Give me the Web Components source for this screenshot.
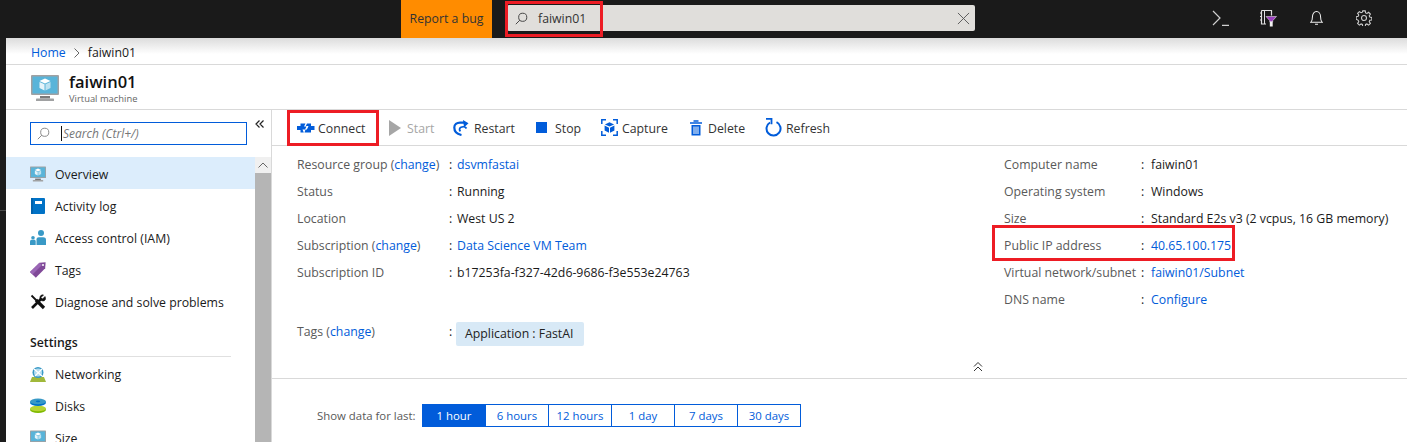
<!DOCTYPE html>
<html>
<head>
<meta charset="utf-8">
<title>faiwin01</title>
<style>
  html, body { margin: 0; height: 442px; overflow: hidden; background: #1a1a1a; }
  body { font: 12.3px/16px "Open Sans", "Liberation Sans", sans-serif; color: #1a1a1a; }
  .page { display: flex; flex-direction: column; height: 442px; }
  .work { display: flex; flex: 1; min-height: 0; }
</style>
</head>
<body>
<div class="page">
  <az-topbar></az-topbar>
  <div class="work">
    <az-strip></az-strip>
    <az-blade></az-blade>
  </div>
</div>

<script>
const ICONS = {
  search: '<svg width="13" height="13" viewBox="0 0 16 16" fill="none" stroke="currentColor" stroke-width="1.2"><circle cx="9.5" cy="6.5" r="5"/><path d="M6 10 1 15"/></svg>',
  close: '<svg width="13" height="13" viewBox="0 0 14 14" fill="none" stroke="#555" stroke-width="1"><path d="M1 1l12 12M13 1 1 13"/></svg>',
  shell: '<svg width="17" height="16" viewBox="0 0 17 16" fill="none" stroke="#d0d0d0" stroke-width="1.2"><path d="M1 1l7 7-7 7M10 15.400H17"/></svg>',
  directory: '<svg width="18" height="18" viewBox="0 0 18 18" fill="none"><path d="M2.500 1.500h10v5M7 15H2.500V1.500" stroke="#e0e0e0" stroke-width="1.200"/><path d="M5.500 1.500V15" stroke="#e0e0e0"/><path d="M1 4h2M1 7.500h2M1 11h2" stroke="#e0e0e0"/><path d="M7 7.500h10.500l-3.800 4.200v1.300h-2.900v-1.300z" fill="#9b3fc0" stroke="#ddd" stroke-width=".6"/><path d="M10.800 12.500h2.900V17.500h-2.900z" fill="#f2f2f2"/></svg>',
  bell: '<svg width="13" height="16" viewBox="0 0 14 16" fill="none" stroke="#f0f0f0" stroke-width="1.100"><path d="M1 12.500c1.400-1.200 1.600-2.400 1.600-5.500C2.600 3.400 4.600 1 7 1s4.400 2.400 4.400 6c0 3.100.2 4.300 1.600 5.500zM5.400 14.700h3.200"/></svg>',
  gear: '<svg width="16" height="16" viewBox="0 0 18 18" fill="none" stroke="#cfcfcf" stroke-width="1.200"><circle cx="9" cy="9" r="2.800"/><path d="M7.600 1h2.800l.4 2.300 1.500.6 1.900-1.300 2 2-1.300 1.900.6 1.500 2.300.4v2.800l-2.300.4-.6 1.500 1.300 1.900-2 2-1.900-1.300-1.500.6-.4 2.300H7.600l-.4-2.300-1.500-.6-1.900 1.300-2-2 1.300-1.900-.6-1.500L.2 10.400V7.600l2.300-.4.6-1.500L1.800 3.800l2-2 1.900 1.300 1.500-.6z"/></svg>',
  vm: '<svg width="100%" height="100%" viewBox="0 0 28 28"><rect x="0" y="1" width="28" height="20" rx="1" fill="#a0a1a2"/><rect x="1.500" y="2.500" width="25" height="17" fill="#59b4d9"/><path d="M9 22h10v2.500H9z" fill="#7a7a7a"/><path d="M6 24.500h16c.6 0 1 .4 1 1V27H5v-1.500c0-.6.4-1 1-1z" fill="#a0a1a2"/><path d="M14 4.500l5.500 2.500-5.500 2.500L8.500 7z" fill="#fff"/><path d="M8.500 8l5 2.300v6.200l-5-2.500z" fill="#fff" opacity=".85"/><path d="M19.500 8l-5 2.300v6.200l5-2.500z" fill="#fff" opacity=".6"/></svg>',
  log: '<svg width="16" height="16" viewBox="0 0 16 16"><rect x="1" y="0" width="14" height="16" rx="1" fill="#0072c6"/><rect x="1" y="0" width="2" height="16" fill="#0062ad"/><rect x="5" y="3" width="7" height="3" fill="#fff"/></svg>',
  iam: '<svg width="16" height="16" viewBox="0 0 16 16" fill="#3999c6"><circle cx="11" cy="3" r="3"/><path d="M6.500 15V9.500c0-1.400 1-2.300 2.300-2.300h4.400c1.400 0 2.800.9 2.800 2.300V15z"/><circle cx="3" cy="7.800" r="1.800"/><path d="M0 15v-3.500c0-1.100.9-1.700 2-1.700h2.200c.9 0 1.500.6 1.500 1.700V15z"/></svg>',
  tag: '<svg width="16" height="16" viewBox="0 0 16 16"><path d="M0 10 9.500.8 15.600.2 15.200 6.300 5.800 15.700z" fill="#804998"/><path d="M0 10 9.500.8 12 3 2.500 12.500z" fill="#9a66b5"/><circle cx="13" cy="3" r="1" fill="#fff"/></svg>',
  tools: '<svg width="16" height="16" viewBox="0 0 16 16" fill="none" stroke="#111"><path d="M1.500 1.500l5 5" stroke-width="1.800"/><path d="M6 6l8 8" stroke-width="3.200"/><path d="M11.500 4.500 2 14" stroke-width="2.600"/><path d="M15 2.500l-2.500 2.500-1.500-1.500 2.500-2.500c-2-.6-4 1-3.600 3.500.2 1.800 2.600 3 4.400 2.200 1.400-.7 1.600-2.700.7-4.200z" fill="#111" stroke-width=".6"/></svg>',
  net: '<svg width="16" height="16" viewBox="0 0 16 16"><path d="M2 11h12l2 5H0z" fill="#a0b83a"/><circle cx="8" cy="6.500" r="5.500" fill="#3999c6"/><circle cx="8" cy="6.500" r="4" fill="#b3dcf0"/><path d="M4 3l8 7M5 10l7-7" stroke="#fff" stroke-width="1.200"/></svg>',
  disks: '<svg width="16" height="16" viewBox="0 0 16 16"><ellipse cx="8" cy="11.800" rx="8" ry="3.200" fill="#7fba00"/><ellipse cx="8" cy="10.400" rx="8" ry="2.800" fill="#b8d432"/><ellipse cx="8" cy="4.800" rx="8" ry="3.200" fill="#0072c6"/><ellipse cx="8" cy="3.400" rx="8" ry="2.800" fill="#3999c6"/><ellipse cx="8" cy="3.400" rx="2.200" ry=".8" fill="#0072c6"/></svg>',
  connect: '<svg width="18" height="10" viewBox="0 0 18 10" fill="#015cda"><path d="M0 3h3.500V.5h5L7 3.500h2.500L8 6.500H5.500L6.800 9.500H3.500V7H0z"/><path d="M17.500 3H14V.5H10L8.800 3h2.700l-1.600 3.500H8.500L7.500 9.500H14V7h3.500z"/></svg>',
  start: '<svg width="12" height="16" viewBox="0 0 12 16" fill="#a6a6a6"><path d="M0 0l12 8-12 8z"/></svg>',
  restart: '<svg width="16" height="16" viewBox="0 0 16 16" fill="none" stroke="#015cda" stroke-width="2.200"><path d="M8.500 15C4.500 14.200 1.300 11.800 1.300 7.500 1.300 4.500 3.800 2.700 7 2.700h4"/><path d="M10 0l5.500 3.200L11 7.500z" fill="#015cda" stroke="none"/><path d="M13.500 8.500C12.500 7 10 6.300 8 7.200 6.300 8 6 10 7.500 11.300" stroke-width="1.800"/></svg>',
  stop: '<svg width="11" height="11" viewBox="0 0 11 11" fill="#015cda"><rect width="11" height="11"/></svg>',
  capture: '<svg width="17" height="17" viewBox="0 0 17 17"><path d="M.8 5V.8H5M12 .8h4.200V5M16.200 12v4.200H12M5 16.200H.8V12" fill="none" stroke="#015cda" stroke-width="1.500"/><path d="M8.500 3.200l4.600 2.200-4.600 2.200-4.600-2.200z" fill="#015cda"/><path d="M3.600 6.600l4.400 2.100v5l-4.400-2.300zM13.400 6.600L9 8.700v5l4.400-2.300z" fill="#015cda"/></svg>',
  trash: '<svg width="12" height="16" viewBox="0 0 12 16"><path d="M3.500 1h5M0 3h12" stroke="#015cda" stroke-width="1.600" fill="none"/><path d="M1.500 5h9v10.500h-9z" fill="#015cda"/><path d="M4 6.500v7.500M6 6.500v7.500M8 6.500v7.500" stroke="#fff"/></svg>',
  refresh: '<svg width="17" height="19" viewBox="0 0 17 19" fill="none" stroke="#015cda" stroke-width="2"><path d="M11.500 4.200A7 7 0 1 1 5 4.500"/><path d="M1 .8h5.500v5.500" stroke-width="1.800"/></svg>',
};

function define(name, css, html, setup) {
  customElements.define(name, class extends HTMLElement {
    connectedCallback() {
      if (this.shadowRoot) return;
      const root = this.attachShadow({ mode: 'open' });
      const a = (k, d = '') => this.getAttribute(k) ?? d;
      root.innerHTML = `<style>${css}</style>` + (typeof html === 'function' ? html(a) : html);
      if (setup) setup(root, a);
    }
  });
}

define('az-topbar', `
  :host { display: flex; align-items: flex-start; height: 38px; background: #1a1a1a; flex: none; position: relative; }
  .bug { margin-left: 401px; width: 91px; height: 38px; background: #ff8c00; color: #333; text-align: center; line-height: 37px; }
  .search { margin: 5px 0 0 15px; width: 468px; height: 26px; background: #e0dedb; border-radius: 2px; display: flex; align-items: center; color: #444; box-sizing: border-box; padding: 0 5px 0 8px; }
  .search span { margin-left: 10px; flex: 1; color: #333; padding-top: 1px; }
  .icons { margin-left: auto; display: grid; grid-template-columns: repeat(4, 48px); justify-items: center; align-items: center; height: 18px; margin-right: 19px; padding-top: 9px; }
  .mark { position: absolute; left: 505px; top: 1px; width: 98px; height: 36px; box-sizing: border-box; border: 3px solid #ed1c24; }
`, `
  <div class="bug">Report a bug</div>
  <div class="search">${ICONS.search}<span>faiwin01</span>${ICONS.close}</div>
  <div class="icons">${ICONS.shell}${ICONS.directory}${ICONS.bell}${ICONS.gear}</div>
  <div class="mark"></div>
`);

define('az-strip', `
  :host { display: block; width: 6px; flex: none; background: #1c1c1c; position: relative; }
  i { display: block; height: 1px; margin-top: 172px; background: #4a4a4a; }
`, `<i></i>`);

define('az-blade', `
  :host { display: flex; flex-direction: column; flex: 1; min-width: 0; background: #fff; }
  .crumb { flex: none; box-sizing: border-box; border-bottom: 1px solid #d9d9d9; height: 27px; padding: 3px 0 0 25px; background: linear-gradient(#dcdcdc, #fff 62%); display: flex; align-items: center; }
  .crumb a { color: #015cda; }
  .crumb svg { margin: 0 8px 0 8px; }
  .title { height: 45px; flex: none; box-sizing: border-box; border-bottom: 1px solid #d9d9d9; display: flex; padding: 9px 0 0 25px; }
  .pic { width: 28px; height: 28px; margin-right: 10px; }
  h1 { margin: -2px 0 0; font: 600 16.5px/20px "Open Sans", sans-serif; color: #111; }
  small { display: block; font-size: 9.4px; line-height: 11px; color: #666; margin-top: 1px; }
  .body { display: flex; flex: 1; min-height: 0; }
`, `
  <div class="crumb"><a>Home</a><svg width="6" height="10" viewBox="0 0 6 10" fill="none" stroke="#666"><path d="M.5.500l4.500 4.500-4.500 4.500"/></svg><span>faiwin01</span></div>
  <div class="title"><div class="pic">${ICONS.vm}</div><div><h1>faiwin01</h1><small>Virtual machine</small></div></div>
  <div class="body"><az-nav></az-nav><az-overview></az-overview></div>
`);

define('az-nav', `
  :host { display: grid; grid-template-columns: 249px 16px; grid-template-rows: 47px 1fr; width: 265px; flex: none; border-right: 1px solid #d9d9d9; box-sizing: content-box; overflow: hidden; }
  .top { grid-column: 1 / 3; display: flex; align-items: flex-start; padding: 12px 0 0 24px; }
  .box { width: 217px; height: 23px; box-sizing: border-box; border: 1px solid #015cda; display: flex; align-items: center; color: #888; padding-left: 6px; }
  .box em { margin-left: 11px; padding-left: 1px; border-left: 1px solid #111; line-height: 15px; font-size: 12px; color: #777; }
  .chev { margin: -2px 0 0 8px; }
  .items { overflow: hidden; }
  .settings { padding: 15px 0 0; margin: 0 24px; height: 40px; box-sizing: border-box; border-bottom: 1px solid #e0e0e0; font-weight: 600; line-height: 22px; }
  .bar { background: #b5b5b5; }
  .up { height: 16px; background: #f0f0f0; display: flex; align-items: center; justify-content: center; }
`, `
  <div class="top"><div class="box">${ICONS.search}<em>Search (Ctrl+/)</em></div><svg class="chev" width="9" height="8" viewBox="0 0 9 8" fill="none" stroke="#222" stroke-width="1.200"><path d="M4.500 .5 1 4l3.500 3.500M8.500 .5 5 4l3.500 3.500"/></svg></div>
  <div class="items">
    <az-nav-item icon="vm" selected>Overview</az-nav-item>
    <az-nav-item icon="log">Activity log</az-nav-item>
    <az-nav-item icon="iam">Access control (IAM)</az-nav-item>
    <az-nav-item icon="tag">Tags</az-nav-item>
    <az-nav-item icon="tools">Diagnose and solve problems</az-nav-item>
    <div class="settings">Settings</div>
    <az-nav-item icon="net">Networking</az-nav-item>
    <az-nav-item icon="disks">Disks</az-nav-item>
    <az-nav-item icon="vm">Size</az-nav-item>
  </div>
  <div class="bar"><div class="up"><svg width="10" height="6" viewBox="0 0 10 6" fill="none" stroke="#666"><path d="M.5 5.500 5 1l4.500 4.500"/></svg></div></div>
`);

define('az-nav-item', `
  :host { display: flex; align-items: center; height: 32px; padding-left: 24px; }
  :host([selected]) { background: #dcedfc; }
  .i { width: 16px; height: 16px; margin: 1px 9px 0 0; flex: none; }
  span { padding-top: 3px; }
`, a => `<div class="i">${ICONS[a('icon')]}</div><span><slot></slot></span>`);

define('az-overview', `
  :host { display: flex; flex-direction: column; flex: 1; min-width: 0; }
  .tools { height: 36px; flex: none; box-sizing: border-box; border-bottom: 1px solid #d9d9d9; display: flex; padding-left: 17px; }
  .ess { height: 233px; flex: none; box-sizing: border-box; padding: 5px 0 0 25px; display: grid; grid-template-columns: 707px 1fr; border-bottom: 1px solid #d9d9d9; position: relative; }
  .col { display: flex; flex-direction: column; }
  .tagrow { margin-top: 32px; }
  .fold { position: absolute; left: 701px; top: 216px; }
  .range { display: flex; align-items: center; padding: 25px 0 0 45px; font-size: 11.4px; }
  .range > span { width: 105px; color: #595959; }
  .btns { display: flex; border: 1px solid #015cda; }
  .btns az-range-btn + az-range-btn { border-left: 1px solid #015cda; }
`, `
  <div class="tools">
    <az-tool icon="connect" marked w="89" pad="8" gap="3">Connect</az-tool>
    <az-tool icon="start" disabled w="64" pad="11" gap="6">Start</az-tool>
    <az-tool icon="restart" w="83" pad="11" gap="5">Restart</az-tool>
    <az-tool icon="stop" w="65" pad="11" gap="8">Stop</az-tool>
    <az-tool icon="capture" w="89" pad="11" gap="4">Capture</az-tool>
    <az-tool icon="trash" w="75" pad="11" gap="6">Delete</az-tool>
    <az-tool icon="refresh" w="84" pad="11" gap="4">Refresh</az-tool>
  </div>
  <div class="ess">
    <div class="col">
      <az-field label="Resource group" change><a>dsvmfastai</a></az-field>
      <az-field label="Status">Running</az-field>
      <az-field label="Location">West US 2</az-field>
      <az-field label="Subscription" change><a>Data Science VM Team</a></az-field>
      <az-field label="Subscription ID">b17253fa-f327-42d6-9686-f3e553e24763</az-field>
      <az-field class="tagrow" label="Tags" change><az-chip>Application : FastAI</az-chip></az-field>
    </div>
    <div class="col">
      <az-field wide label="Computer name">faiwin01</az-field>
      <az-field wide label="Operating system">Windows</az-field>
      <az-field wide label="Size">Standard E2s v3 (2 vcpus, 16 GB memory)</az-field>
      <az-field wide marked label="Public IP address"><a>40.65.100.175</a></az-field>
      <az-field wide label="Virtual network/subnet"><a>faiwin01/Subnet</a></az-field>
      <az-field wide label="DNS name"><a>Configure</a></az-field>
    </div>
    <svg class="fold" width="10" height="10" viewBox="0 0 10 10" fill="none" stroke="#333"><path d="M1 4.500l4-4 4 4M1 9l4-4 4 4"/></svg>
  </div>
  <div class="range">
    <span>Show data for last:</span>
    <div class="btns">
      <az-range-btn selected>1 hour</az-range-btn><az-range-btn>6 hours</az-range-btn><az-range-btn>12 hours</az-range-btn><az-range-btn>1 day</az-range-btn><az-range-btn>7 days</az-range-btn><az-range-btn>30 days</az-range-btn>
    </div>
  </div>
`, (root) => {
  // links live in the light DOM of fields, colour them here
  root.querySelectorAll('az-field a').forEach(a => { a.style.color = '#015cda'; });
});

define('az-tool', `
  :host { display: flex; align-items: center; flex: none; box-sizing: border-box; height: 35px; position: relative; color: #333; }
  :host([disabled]) { color: #a6a6a6; }
  .i { flex: none; display: flex; align-items: center; }
  span { padding-top: 2px; }
  .mark { position: absolute; inset: 0 -1px -1px -2px; border: 3px solid #ed1c24; }
`, a => `<div class="i">${ICONS[a('icon')]}</div><span><slot></slot></span>${a('marked', null) !== null ? '<div class="mark"></div>' : ''}`, (root, a) => {
  const host = root.host;
  host.style.width = a('w') + 'px';
  host.style.paddingLeft = a('pad') + 'px';
  root.querySelector('.i').style.marginRight = a('gap') + 'px';
});

define('az-field', `
  :host { display: flex; min-height: 27px; line-height: 27px; position: relative; align-items: flex-start; }
  .k { width: 152px; flex: none; color: #595959; }
  :host([wide]) .k { width: 137px; }
  :host([wide]) .c { width: 10px; }
  .k a { color: #015cda; }
  .c { width: 8px; flex: none; }
  .mark { position: absolute; left: -12px; top: -7px; height: 36px; width: 243px; box-sizing: border-box; border: 3px solid #ed1c24; }
`, a => `<div class="k">${a('label')}${a('change', null) !== null ? ' (<a>change</a>)' : ''}</div><div class="c">:</div><div><slot></slot></div>${a('marked', null) !== null ? '<div class="mark"></div>' : ''}`);

define('az-chip', `
  :host { display: inline-block; background: #d8e9f6; border-radius: 2px; padding: 0 9px; line-height: 24px; margin: 4px 0 0 -1px; color: #222; width: 110px; }
`, `<slot></slot>`);

define('az-range-btn', `
  :host { display: block; width: 62px; height: 21px; line-height: 22px; text-align: center; color: #015cda; }
  :host([selected]) { background: #015cda; color: #fff; }
`, `<slot></slot>`);
</script>
</body>
</html>
